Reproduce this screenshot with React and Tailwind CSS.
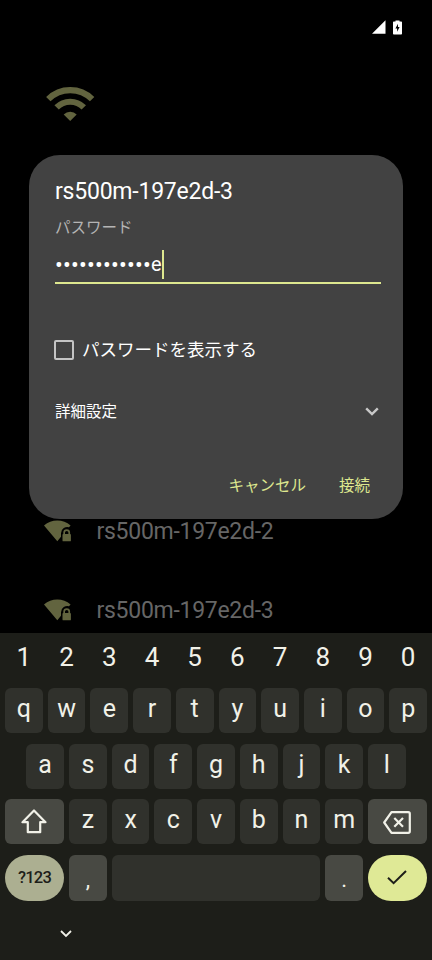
import React from 'react';

const numberRow = ['1', '2', '3', '4', '5', '6', '7', '8', '9', '0'];
const topRow = ['q', 'w', 'e', 'r', 't', 'y', 'u', 'i', 'o', 'p'];
const middleRow = ['a', 's', 'd', 'f', 'g', 'h', 'j', 'k', 'l'];
const bottomRow = ['z', 'x', 'c', 'v', 'b', 'n', 'm'];
const networks = ['rs500m-197e2d-2', 'rs500m-197e2d-3'];

const StatusBar = () => (
  <div className="flex h-[54px] items-center justify-end gap-[7.5px] pr-[30px] text-white">
    <svg width="14" height="14" viewBox="0 0 14 14" fill="currentColor">
      <path d="M13.5 0.2V13.8H0z" />
    </svg>
    <svg width="9" height="15" viewBox="0 0 9 15">
      <path d="M2.5 0.5h4v1H8.2q.8 0 .8.8V13.7q0 .8-.8.8H.8q-.8 0-.8-.8V2.3q0-.8.8-.8H2.5z" fill="currentColor" />
      <path d="M5 3.8L2.4 8.5H4.1v3.2L6.6 7H5z" fill="#000" />
    </svg>
  </div>
);

const WifiIcon = () => (
  <svg width="50" height="36" viewBox="0 0 50 36" fill="none" stroke="#62643f" strokeWidth="6.2">
    <path d="M3.3 13.1A31 31 0 0 1 47.1 13.1" />
    <path d="M11.6 21.4A19.2 19.2 0 0 1 38.8 21.4" />
    <path d="M25.2 35L18.7 28.5A9.2 9.2 0 0 1 31.7 28.5z" fill="#62643f" stroke="none" />
  </svg>
);

const WifiLockIcon = () => (
  <svg width="28" height="22" viewBox="0 0 28 22" fill="#62643f">
    <path d="M13.3 21.2L0 5.4Q5.8 .6 13.3 .6T26.6 5.4L25 7.3Q22.3 6.6 19.8 8.1Q17 10 17 13.2V16.8z" />
    <path
      fillRule="evenodd"
      d="M19.3 14.1V12.6a3.4 3.4 0 0 1 6.8 0v1.5q.8 0 .8.9v5.4q0 .9-.9.9h-6.6q-.9 0-.9-.9v-5.4q0-.9.8-.9zM21 14.1h3.4v-1.5a1.7 1.7 0 0 0-3.4 0z"
    />
  </svg>
);

const PasswordDialog = () => (
  <div
    role="dialog"
    className="absolute left-[29px] top-[155px] flex h-[364px] w-[374px] flex-col rounded-[31px] bg-[#424242] pl-[26px] pr-[22px] pt-[23px] text-white"
  >
    <h1 className="h-[28px] text-[23px] leading-[28px] tracking-[-0.22px]">rs500m-197e2d-3</h1>
    <label className="mt-[12px] h-[20px] text-[15.5px] leading-[20px] text-[#b4b4b4]">パスワード</label>
    <div className="mt-[12px] flex h-[34px] items-start border-b-[2px] border-[#dde78f]">
      <div className="flex h-[29px] items-center">
        {Array.from({ length: 12 }, (_, i) => (
          <span key={i} className="flex w-[8px] justify-center pt-px text-[23px] leading-[29px]">
            •
          </span>
        ))}
        <span className="text-[20px] leading-[29px]">e</span>
        <span className="h-[29px] w-[2.5px] bg-[#dde78f]" />
      </div>
    </div>
    <label className="mt-[52px] flex h-[28px] items-center text-[17.5px]">
      <span className="-ml-px mr-[8px] h-[20px] w-[20px] rounded-[2px] border-2 border-[#c4c4c4]" />
      パスワードを表示する
    </label>
    <div className="mt-[34px] flex h-[28px] items-center justify-between text-[15.5px]">
      <span className="pt-[2px]">詳細設定</span>
      <svg width="14" height="9" viewBox="0 0 14 9" className="mb-[2px] mr-[2px]" fill="none" stroke="#c8c8c8" strokeWidth="2.4">
        <path d="M1.2 1.3L7 7L12.8 1.3" />
      </svg>
    </div>
    <div className="mt-[47px] flex h-[28px] items-center justify-end gap-[33px] pr-[11px] text-[15.5px] text-[#dde78f]">
      <button>キャンセル</button>
      <button>接続</button>
    </div>
  </div>
);

const Key = ({ children }) => (
  <button className="h-[45px] min-w-0 flex-1 rounded-[6px] bg-[#30312c] pb-[3px] text-[25px] leading-[42px]">{children}</button>
);

const Keyboard = () => (
  <div className="absolute inset-x-0 bottom-0 flex h-[327px] flex-col bg-[#1d1e19] px-[5px] text-[#f1f1e8]">
    <div className="flex h-[55px] gap-[5px]">
      {numberRow.map((n) => (
        <span key={n} className="flex-1 text-center text-[26px] leading-[49px]">{n}</span>
      ))}
    </div>
    <div className="flex gap-[5px]">
      {topRow.map((k) => <Key key={k}>{k}</Key>)}
    </div>
    <div className="mt-[10.5px] flex gap-[5px] px-[21.3px]">
      {middleRow.map((k) => <Key key={k}>{k}</Key>)}
    </div>
    <div className="mt-[10.5px] flex gap-[5px]">
      <button className="flex h-[45px] w-[59px] items-center justify-center rounded-[6px] bg-[#484943]">
        <svg width="26" height="25" viewBox="0 0 26 25" fill="none" stroke="currentColor" strokeWidth="2.2" strokeLinejoin="round" className="mr-px">
          <path d="M13 1.5L1.5 13.2H6.8V23.2H19.2V13.2H24.5z" />
        </svg>
      </button>
      {bottomRow.map((k) => <Key key={k}>{k}</Key>)}
      <button className="flex h-[45px] w-[59px] items-center justify-center rounded-[6px] bg-[#484943]">
        <svg width="28" height="23" viewBox="0 0 28 23" fill="none" stroke="currentColor" strokeWidth="2.2" strokeLinejoin="round" className="mr-px mt-[2px]">
          <path d="M8.5 1.2H25.3Q26.8 1.2 26.8 2.7V20.3Q26.8 21.8 25.3 21.8H8.5L1.2 11.5z" />
          <path d="M11.3 7L20 15.8M20 7L11.3 15.8" />
        </svg>
      </button>
    </div>
    <div className="mt-[10.5px] flex h-[46px] gap-[5px]">
      <button className="w-[59px] rounded-full bg-[#acaf91] pt-px text-[16.5px] font-medium tracking-[-0.8px] text-[#1d1e19]">?123</button>
      <button className="w-[37.7px] rounded-[6px] bg-[#484943] pt-[3px] text-[22px]">,</button>
      <button className="flex-1 rounded-[6px] bg-[#30312c]" aria-label="space" />
      <button className="w-[37.7px] rounded-[6px] bg-[#484943] pt-[3px] text-[22px]">.</button>
      <button className="flex w-[59px] items-center justify-center rounded-full bg-[#dfe996] text-[#1d1e19]">
        <svg width="20" height="15" viewBox="0 0 20 15" fill="none" stroke="currentColor" strokeWidth="2" className="mr-px">
          <path d="M1 7.8L6.6 13.2L19 1" />
        </svg>
      </button>
    </div>
    <svg width="12" height="8" viewBox="0 0 12 8" className="ml-[54.5px] mt-[29.5px]" fill="none" stroke="currentColor" strokeWidth="1.8">
      <path d="M1 1L6 6L11 1" />
    </svg>
  </div>
);

const App = () => (
  <div className="relative h-[960px] w-[432px] overflow-hidden bg-black font-[Roboto,'Noto_Sans_CJK_JP',sans-serif]">
    <StatusBar />
    <div className="ml-[45px] mt-[32px]">
      <WifiIcon />
    </div>
    <div className="mt-[369px] flex flex-col">
      {networks.map((name) => (
        <div key={name} className="flex h-[79px] items-center pl-[44px] text-[23px] tracking-[-0.28px] text-[#666]">
          <WifiLockIcon />
          <span className="ml-[24.5px] pt-[3px]">{name}</span>
        </div>
      ))}
    </div>
    <PasswordDialog />
    <Keyboard />
  </div>
);

export default App;
